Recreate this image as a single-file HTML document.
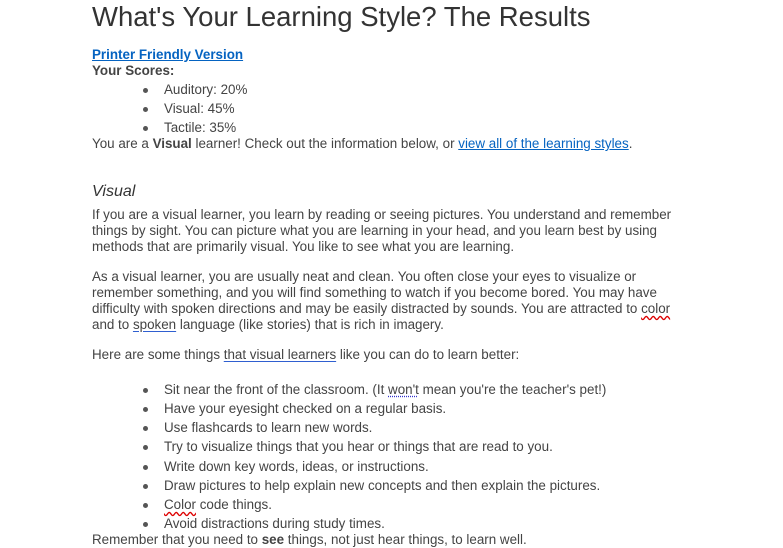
<!DOCTYPE html>
<html><head><meta charset="utf-8"><style>
body{margin:0;width:783px;height:547px;background:#fff;position:relative;overflow:hidden;font-family:"Liberation Sans",Arial,sans-serif;color:#444;font-size:13.4px}
.l{position:absolute;left:92px;white-space:nowrap;line-height:16px;height:16px}
.b{left:164px}
.b:before{content:"";position:absolute;left:-21px;top:6px;width:5px;height:5px;border-radius:50%;background:#555}
a{color:#0563c1;text-decoration:underline}
.sq{text-decoration:underline wavy #d00;text-underline-offset:2px}
.bl{text-decoration:underline;text-decoration-color:#2f5fd0;text-underline-offset:2px}
.dt{text-decoration:underline dotted #33c;text-underline-offset:2px}
</style></head><body>
<div class="l" style="top:1px;font-size:27.5px;line-height:32px;height:32px;color:#333">What's Your Learning Style? The Results</div>
<div class="l" style="top:47px;font-weight:bold"><a>Printer Friendly Version</a></div>
<div class="l" style="top:63px;font-weight:bold">Your Scores:</div>
<div class="l b" style="top:82px">Auditory: 20%</div>
<div class="l b" style="top:101px">Visual: 45%</div>
<div class="l b" style="top:120px">Tactile: 35%</div>
<div class="l" style="top:136px">You are a <b>Visual</b> learner! Check out the information below, or <a>view all of the learning styles</a>.</div>
<div class="l" style="top:183px;font-size:16px;line-height:18px;font-style:italic;color:#333">Visual</div>
<div class="l" style="top:207px">If you are a visual learner, you learn by reading or seeing pictures. You understand and remember</div>
<div class="l" style="top:223px">things by sight. You can picture what you are learning in your head, and you learn best by using</div>
<div class="l" style="top:239px">methods that are primarily visual. You like to see what you are learning.</div>
<div class="l" style="top:269px">As a visual learner, you are usually neat and clean. You often close your eyes to visualize or</div>
<div class="l" style="top:285px">remember something, and you will find something to watch if you become bored. You may have</div>
<div class="l" style="top:301px">difficulty with spoken directions and may be easily distracted by sounds. You are attracted to <span class="sq">color</span></div>
<div class="l" style="top:317px">and to <span class="bl">spoken</span> language (like stories) that is rich in imagery.</div>
<div class="l" style="top:347px">Here are some things <span class="bl">that visual learners</span> like you can do to learn better:</div>
<div class="l b" style="top:382px">Sit near the front of the classroom. (It <span class="dt">won't</span> mean you're the teacher's pet!)</div>
<div class="l b" style="top:401px">Have your eyesight checked on a regular basis.</div>
<div class="l b" style="top:420px">Use flashcards to learn new words.</div>
<div class="l b" style="top:439px">Try to visualize things that you hear or things that are read to you.</div>
<div class="l b" style="top:459px">Write down key words, ideas, or instructions.</div>
<div class="l b" style="top:478px">Draw pictures to help explain new concepts and then explain the pictures.</div>
<div class="l b" style="top:497px"><span class="sq">Color</span> code things.</div>
<div class="l b" style="top:516px">Avoid distractions during study times.</div>
<div class="l" style="top:532px">Remember that you need to <b>see</b> things, not just hear things, to learn well.</div>
</body></html>
